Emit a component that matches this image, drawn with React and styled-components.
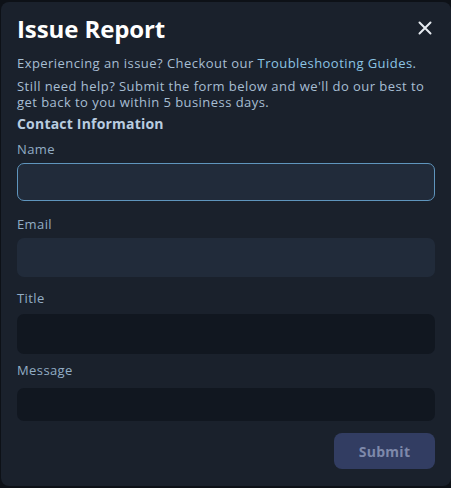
import styled, { createGlobalStyle } from 'styled-components';

const GlobalStyle = createGlobalStyle`
  html, body {
    margin: 0;
    padding: 0;
    background: #0d1117;
  }
  * {
    box-sizing: border-box;
  }
`;

const Overlay = styled.div`
  width: 451px;
  height: 488px;
  padding: 2px 0 2px 1px;
  display: flex;
`;

const Modal = styled.div`
  flex: 1;
  background: #1a212c;
  border-radius: 8px;
  padding: 9px 16px 16px 16px;
  font-family: 'Open Sans', 'Liberation Sans', sans-serif;
  color: #a7bed3;
  display: flex;
  flex-direction: column;
`;

const Header = styled.div`
  display: flex;
  align-items: center;
  justify-content: space-between;
  height: 34px;
`;

const Title = styled.h1`
  margin: 0;
  font-size: 24px;
  font-weight: 700;
  color: #ffffff;
  letter-spacing: -0.1px;
`;

const CloseButton = styled.button`
  background: none;
  border: none;
  padding: 0;
  width: 20px;
  height: 20px;
  display: flex;
  align-items: center;
  justify-content: center;
  color: #e6ebf0;
  cursor: pointer;
`;

const Text = styled.p`
  margin: ${({ $top }) => $top || 0}px 0 0;
  font-size: 13px;
  line-height: 16px;
  letter-spacing: 0.45px;
`;

const Link = styled.a`
  color: #8cc4e4;
  text-decoration: none;
`;

const SectionTitle = styled.h2`
  margin: 5px 0 0;
  font-size: 14px;
  font-weight: 700;
  color: #b9cde0;
  line-height: 18px;
  letter-spacing: 0.2px;
`;

const Field = styled.label`
  display: flex;
  flex-direction: column;
  margin-top: ${({ $top }) => $top}px;
`;

const Label = styled.span`
  font-size: 13px;
  line-height: 16px;
  color: #92adc5;
  letter-spacing: 0.4px;
  margin-bottom: ${({ $gap }) => $gap}px;
`;

const Input = styled.input`
  height: ${({ $h }) => $h}px;
  border-radius: 7px;
  border: 1.5px solid ${({ $focused }) => ($focused ? '#5f95bd' : 'transparent')};
  background: ${({ $tone }) => ($tone === 'dark' ? '#111720' : '#212b3a')};
  outline: none;
  color: #ffffff;
  padding: 0 12px;
  font-family: inherit;
  font-size: 13px;
`;

const Footer = styled.div`
  display: flex;
  justify-content: flex-end;
  margin-top: 12px;
`;

const SubmitButton = styled.button`
  width: 101px;
  height: 36px;
  border: none;
  border-radius: 8px;
  background: #323d62;
  color: #7e89aa;
  font-family: inherit;
  font-size: 14px;
  font-weight: 700;
  letter-spacing: 0.3px;
`;

export default function App() {
  return (
    <>
      <GlobalStyle />
      <Overlay>
        <Modal>
          <Header>
            <Title>Issue Report</Title>
            <CloseButton aria-label="Close">
              <svg width="14" height="14" viewBox="0 0 14 14">
                <path d="M1.5 1.5 L12.5 12.5 M12.5 1.5 L1.5 12.5" stroke="currentColor" strokeWidth="2" strokeLinecap="round" />
              </svg>
            </CloseButton>
          </Header>
          <Text $top={10}>
            Experiencing an issue? Checkout our <Link href="#">Troubleshooting Guides</Link>.
          </Text>
          <Text $top={7}>
            Still need help? Submit the form below and we'll do our best to get back to you within 5 business days.
          </Text>
          <SectionTitle>Contact Information</SectionTitle>
          <Field $top={8}>
            <Label $gap={6}>Name</Label>
            <Input $h={38} $focused />
          </Field>
          <Field $top={15}>
            <Label $gap={6}>Email</Label>
            <Input $h={39} />
          </Field>
          <Field $top={13}>
            <Label $gap={8}>Title</Label>
            <Input $h={40} $tone="dark" />
          </Field>
          <Field $top={8}>
            <Label $gap={10}>Message</Label>
            <Input $h={33} $tone="dark" />
          </Field>
          <Footer>
            <SubmitButton type="button">Submit</SubmitButton>
          </Footer>
        </Modal>
      </Overlay>
    </>
  );
}
